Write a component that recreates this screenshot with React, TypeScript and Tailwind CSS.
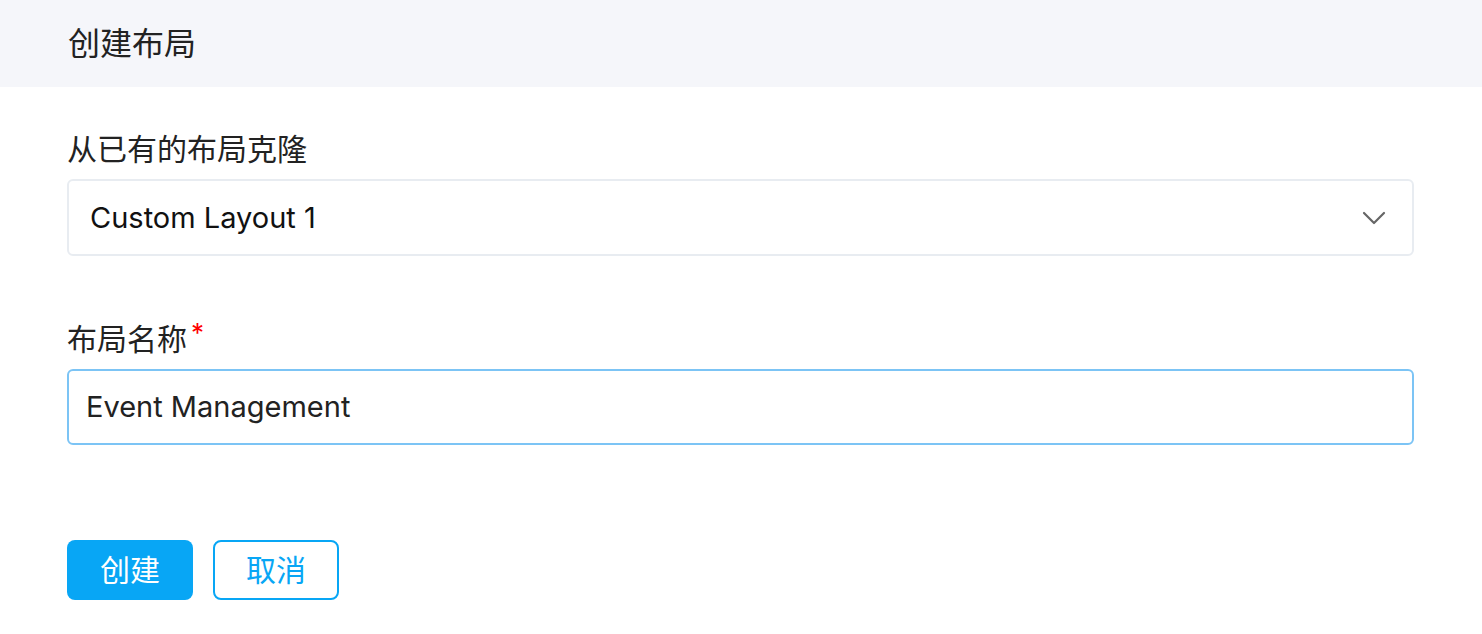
const font = {
  fontFamily: '"Inter", "Noto Sans CJK SC", sans-serif',
};

const Chevron = () => (
  <svg width="24" height="14" viewBox="0 0 24 14" fill="none" className="text-[#666]">
    <path d="M2 2l10 10L22 2" stroke="currentColor" strokeWidth="2.2" strokeLinecap="round" strokeLinejoin="round" />
  </svg>
);

const App = () => {
  return (
    <div className="w-full min-h-screen bg-white text-[#222]" style={font}>
      <div className="h-[87px] bg-[#f5f6fa] flex items-center px-[68px]">
        <h1 className="text-[32px] leading-none text-[#222]">创建布局</h1>
      </div>

      <div className="px-[67px] pr-[68px] pt-[42px]">
        <label className="block text-[30px] leading-[40px] text-[#222]">从已有的布局克隆</label>
        <div className="mt-[10px] h-[77px] border-2 border-[#e8ecf1] rounded-[6px] flex items-center pl-[21px] pr-[26px]">
          <span className="flex-1 text-[29px] text-[#111]">Custom Layout 1</span>
          <Chevron />
        </div>

        <label className="mt-[63px] block text-[30px] leading-[40px] text-[#222]">
          布局名称<span className="text-[#f00] text-[26px] align-top relative -top-[6px] ml-[4px]">*</span>
        </label>
        <div className="mt-[10px] h-[76px] border-2 border-[#7cc4f5] rounded-[6px] flex items-center pl-[17px]">
          <span className="text-[29px] text-[#222]">Event Management</span>
        </div>

        <div className="mt-[95px] flex gap-[20px]">
          <button className="w-[126px] h-[60px] rounded-[8px] bg-[#08a6f5] text-white text-[30px]">创建</button>
          <button className="w-[126px] h-[60px] rounded-[8px] border-2 border-[#08a6f5] text-[#08a6f5] text-[30px]">取消</button>
        </div>
      </div>
    </div>
  );
};

export default App;
